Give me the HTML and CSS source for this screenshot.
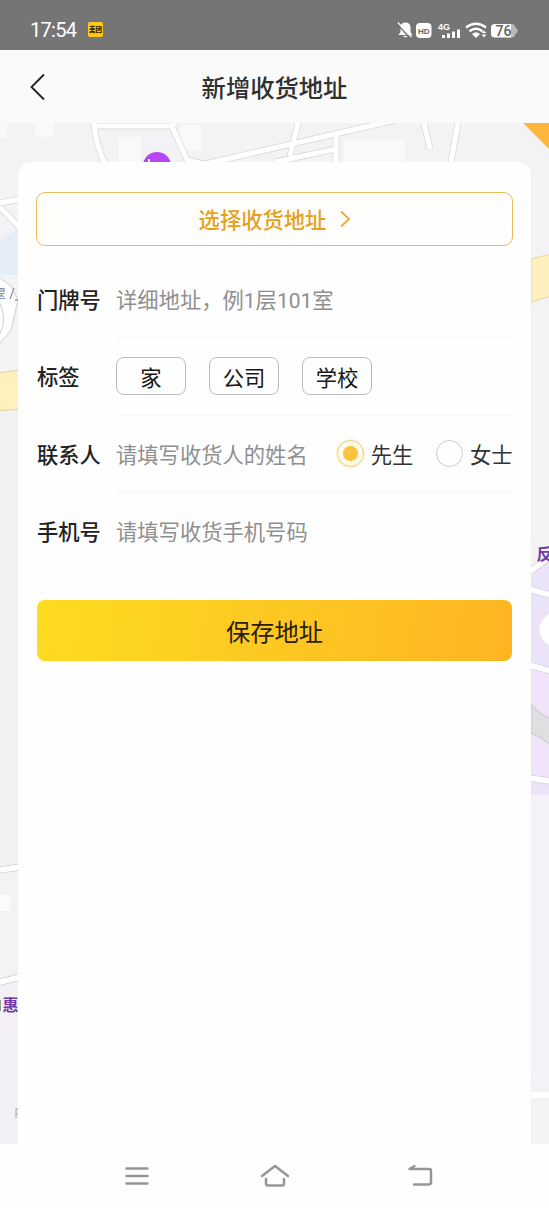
FILE: index.html
```html
<!DOCTYPE html>
<html lang="zh-CN">
<head>
<meta charset="utf-8">
<title>新增收货地址</title>
<link rel="stylesheet" href="styles.css">
</head>
<body>
<div class="phone">
  <header class="status">
    <span class="clock">17:54</span>
    <span class="app-badge">美团</span>
    <svg class="status-icons" width="124" height="22" viewBox="0 0 124 22">
      <!-- muted bell -->
      <path d="M2.500 16L4.500 13V9Q4.500 3.500 9.500 3.500Q14.500 3.500 14.500 9V13L16.500 16H2.500ZM7 17H12Q9.500 19.500 7 17Z" fill="#fff"/>
      <path d="M1 5L14 19" stroke="#757575" stroke-width="1.500"/>
      <path d="M2 3.500L15.500 18" stroke="#fff" stroke-width="1.300"/>
      <rect x="20" y="4" width="15.500" height="15" rx="4" fill="#fff"/>
      <text x="27.800" y="14.500" class="hd">HD</text>
      <text x="42" y="10.500" class="net">4G</text>
      <path d="M47.500 16V19M52.500 14.500V19M57.500 12.500V19M62.500 10.500V19" stroke="#fff" stroke-width="3"/>
      <path d="M70 8.500Q80 1 90 8.500M73.500 12.300Q80 7 86.500 12.300" fill="none" stroke="#fff" stroke-width="2.400"/>
      <path d="M76 15Q80 11.500 84 15L80 19Z" fill="#fff"/>
      <path d="M85.500 14L88 11.500L90.500 14ZM85.500 15.500H90.500L88 18.500Z" fill="#fff"/>
      <path d="M111 5H115Q119 5 119.500 8.500L121.500 10.500V13L119.500 15Q119 18.500 115 18.500H111Z" fill="#bababa"/>
      <path d="M99 5H115V18.500H99Q95 18.500 95 15V8.500Q95 5 99 5Z" fill="#fff"/>
      <text x="107.500" y="16.500" class="battery">76</text>
    </svg>
  </header>
  <nav class="titlebar">
    <svg class="back" width="18" height="28" viewBox="0 0 18 28"><path d="M15 1.500L2.500 14L15 26.500" fill="none" stroke="#222" stroke-width="1.900"/></svg>
    <h1 class="title">新增收货地址</h1>
  </nav>
  <main class="stage">
    <svg class="map" width="549" height="1021" viewBox="0 123 549 1021">
      <rect y="123" width="549" height="1021" fill="#f3f3f5"/>
      <path d="M0 123H7V138H0ZM35 123H54V137H35ZM119 137H141V165H119ZM180 125H202V150H180ZM344 140H405V165H344Z" fill="#f9f9fa"/>
      <path d="M0 240L20 228V275H0Z" fill="#e5edf6"/>
      <g fill="none" stroke="#d4d4d8" stroke-width="6.500">
        <path d="M94 120Q94 143 108 170M94 126L172 126L180 118M172 126L187 160L205 164L400 119M290 156L299 119M336 135V165M275 162L336 149M424 123L430 149M458 123L451 162M0 203L22 199M0 207L22 230"/>
      </g>
      <g fill="none" stroke="#fff" stroke-width="5.200">
        <path d="M94 120Q94 143 108 170M94 126L172 126L180 118M172 126L187 160L205 164L400 119M290 156L299 119M336 135V165M275 162L336 149M424 123L430 149M458 123L451 162M0 203L22 199M0 207L22 230"/>
      </g>
      <circle cx="157" cy="166" r="14" fill="#b646f2"/>
      <path d="M149 159V162" stroke="#fff" stroke-width="2"/>
      <path d="M523 123H549V149Z" fill="#feb63c"/>
      <path d="M531 259L551 254V296L531 302Z" fill="#feefbe" stroke="#ead49a"/>
      <path d="M0 278L11 286L18 300L11 330L0 343" fill="#fff" stroke="#ccd0d8"/>
      <path d="M0 303Q7 320 0 334" fill="none" stroke="#ccd0d8"/>
      <path d="M-2 373L20 370V409L-2 411Z" fill="#fff0bf" stroke="#e8d19a"/>
      <path d="M0 412H20V862H0Z" fill="#f1f1f2"/>
      <text x="-8" y="299" class="poi-grey">翠</text>
      <path d="M10 299L14 288M15 300H18" stroke="#8d9aab" stroke-width="1.300"/>
      <path d="M531 573L549 562V795H531Z" fill="#ebe4f8"/>
      <path d="M531 668L549 672V780H531Z" fill="#f1e3f9"/>
      <path d="M531 795H549V1085H531Z" fill="#f5f1f9"/>
      <path d="M549 614Q537 622 540 634Q542 642 549 645Z" fill="#fff"/>
      <path d="M531 704Q540 715 551 719V745Q540 736 531 733Z" fill="#dfdfe2" stroke="#c8c5cd"/>
      <g fill="none">
        <path d="M529 572L550 557M529 589L550 595M529 665L550 671M529 778L550 781M0 870L20 867M0 982L20 977" stroke="#d2cdd6" stroke-width="7"/>
        <path d="M529 572L550 557M529 589L550 595M529 665L550 671M529 778L550 781M0 870L20 867M0 982L20 977" stroke="#fff" stroke-width="5.500"/>
      </g>
      <text x="536.500" y="560" class="poi">反</text>
      <path d="M0 895H10V911H0Z" fill="#fbfbfc"/>
      <path d="M0 991L20 986V1144H0Z" fill="#f3f0f6"/>
      <path d="M0 1000V1011" stroke="#8ba59d" stroke-width="2"/>
      <text x="2.500" y="1011" class="poi">惠</text>
      <path d="M16 1108V1118M16 1109H19M16 1114H19" stroke="#a9a9ad" fill="none"/>
      <path d="M531 1092H549V1098H531Z" fill="#fff"/>
    </svg>
    <form class="card">
      <button class="picker" type="button"><span>选择收货地址</span>
        <svg width="12" height="20" viewBox="0 0 12 20"><path d="M2 2.500L10 10L2 17.500" fill="none" stroke="#e9ac35" stroke-width="1.800"/></svg>
      </button>
      <div class="row"><span class="label">门牌号</span><div class="field"><span class="hint">详细地址，例<span class="latin">1</span>层<span class="latin">101</span>室</span></div></div>
      <div class="row"><span class="label">标签</span><div class="field tags"><span class="tag">家</span><span class="tag">公司</span><span class="tag">学校</span></div></div>
      <div class="row"><span class="label">联系人</span><div class="field"><span class="hint">请填写收货人的姓名</span>
        <div class="choices"><span class="choice"><i class="radio checked"></i>先生</span><span class="choice"><i class="radio"></i>女士</span></div></div></div>
      <div class="row last"><span class="label">手机号</span><div class="field"><span class="hint">请填写收货手机号码</span></div></div>
      <button class="save" type="button">保存地址</button>
    </form>
  </main>
  <footer class="system">
    <svg width="24" height="20" viewBox="0 0 24 20"><path d="M1.500 2.500H22.500M1.500 10H22.500M1.500 17.500H22.500"/></svg>
    <svg width="30" height="24" viewBox="0 0 30 24"><path d="M2 12L15 2L28 12M6 15V19.500Q6 21.500 8 21.500H22Q24 21.500 24 19.500V15"/></svg>
    <svg width="26" height="24" viewBox="0 0 26 24"><path d="M7.500 2L2.500 5H22Q24 5 24 7V18Q24 20.500 21.500 20.500H7"/></svg>
  </footer>
</div>
</body>
</html>
```
FILE: styles.css
```css
* { box-sizing: border-box; }
body {
  margin: 0;
  font-family: "Noto Sans CJK SC", sans-serif;
  color: #222;
}
button { font-family: inherit; padding: 0; }
.phone {
  width: 549px;
  height: 1208px;
  display: flex;
  flex-direction: column;
  background: #fefefe;
  overflow: hidden;
}
.status {
  height: 50px;
  padding: 9px 29px 0 30px;
  display: flex;
  align-items: center;
  background: #757575;
}
.clock { font: 20px/22px Roboto, sans-serif; color: #fff; width: 58px; letter-spacing: -0.7px; }
.app-badge {
  width: 15px;
  height: 15px;
  border-radius: 2px;
  background: #fcc91c;
  color: #2b1a00;
  font-size: 6.5px;
  line-height: 14px;
  font-weight: 900;
  text-align: center;
  white-space: nowrap;
}
.status-icons { margin-left: auto; }
.hd { font: bold 8px "Liberation Sans", sans-serif; fill: #666; text-anchor: middle; }
.net { font: bold 9px "Liberation Sans", sans-serif; fill: #fff; }
.battery { font: 500 14px Roboto, sans-serif; fill: #606060; text-anchor: middle; }
.titlebar {
  height: 73px;
  display: grid;
  grid-template-columns: 1fr auto 1fr;
  align-items: center;
  padding-left: 29px;
  padding-right: 29px;
  background: #fafafa;
}
.title {
  grid-column: 2;
  margin: 0;
  font-size: 24.3px;
  line-height: 36px;
  font-weight: 500;
  color: #303030;
}
.stage {
  position: relative;
  height: 1021px;
  padding: 39px 18px 0;
}
.map { position: absolute; left: 0; top: 0; }
.poi { font-size: 16px; font-weight: 700; fill: #7339a8; }
.poi-grey { font-size: 14px; font-weight: 500; fill: #8d9aab; }
.card {
  position: relative;
  height: 982px;
  padding: 30px 18px 0;
  border-radius: 14px 14px 0 0;
  background: #fefefe;
}
.picker {
  display: flex;
  width: 477px;
  height: 54px;
  margin-bottom: 15px;
  padding: 0 0 0 1px;
  align-items: center;
  justify-content: center;
  gap: 13px;
  border: 1.5px solid #e8bf55;
  border-radius: 9px;
  background: #fffefc;
  color: #e6a11c;
  font-size: 21.3px;
  font-weight: 500;
}
.picker span { padding-bottom: 2px; }
.row {
  height: 77.3px;
  width: 476px;
  display: flex;
  font-size: 21.3px;
}
.label { width: 80px; padding-left: 1px; line-height: 76px; font-weight: 500; }
.field {
  flex: 1;
  display: flex;
  align-items: center;
  border-bottom: 1px solid #f7f7f7;
  white-space: nowrap;
}
.last .field { border-color: transparent; }
.hint { color: #8f8f8f; padding-bottom: 1px; }
.latin { font-family: Roboto, sans-serif; font-size: 21px; }
.tags { gap: 23px; }
.tag {
  width: 70px;
  height: 38px;
  border: 1px solid #bcbcbc;
  border-radius: 8px;
  line-height: 37px;
  text-align: center;
  color: #171717;
}
.choices { display: flex; gap: 23px; margin: 0 -0.5px 0 auto; }
.choice { display: flex; align-items: center; gap: 6.5px; color: #333; }
.radio {
  width: 27px;
  height: 27px;
  border: 1.5px solid #c9c9c9;
  border-radius: 50%;
}
.checked {
  border-color: #e9c979;
  background: radial-gradient(circle, #fdc33e 7px, #fffbe8 8px);
  box-shadow: 0 0 1px 1px #fff5cf;
}
.save {
  display: block;
  width: 475px;
  height: 61px;
  margin: 30px 0 0 1px;
  border: 0;
  border-radius: 8px;
  background: linear-gradient(100deg, #fddc21, #fdb522);
  color: #2b1c08;
  font-size: 24.3px;
}
.system {
  height: 64px;
  padding: 0 116px 0 125px;
  display: grid;
  grid-template-columns: 135px 147px 26px;
  align-items: center;
}
.system svg { fill: none; stroke: #969696; stroke-width: 2.5; stroke-linecap: round; stroke-linejoin: round; }
```
